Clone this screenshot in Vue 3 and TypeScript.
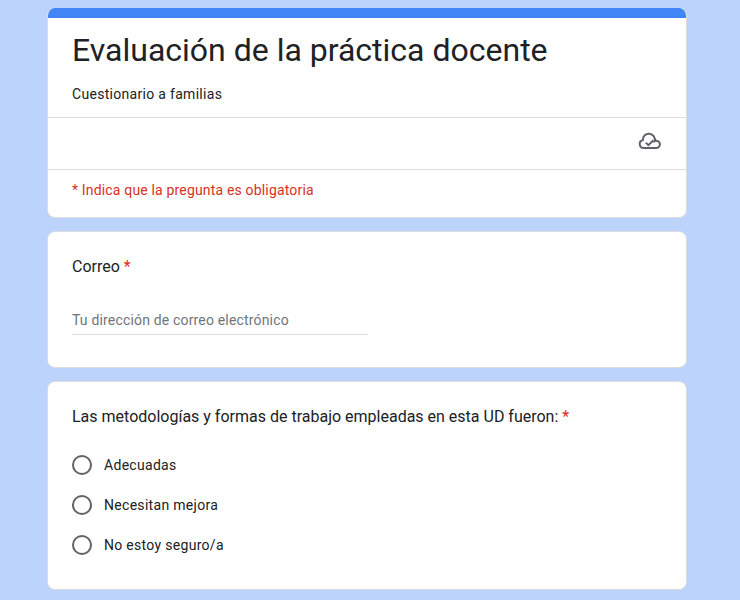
<script setup lang="ts">
const options: string[] = ['Adecuadas', 'Necesitan mejora', 'No estoy seguro/a']
</script>

<template>
  <main class="page">
    <section class="card head">
      <div class="bar"></div>
      <div class="intro">
        <h1 class="title">Evaluación de la práctica docente</h1>
        <p class="subtitle">Cuestionario a familias</p>
      </div>
      <div class="status">
        <svg class="cloud" viewBox="0 0 24 24" width="24" height="24" aria-hidden="true">
          <path d="M5.8 19A4.05 4.05 0 0 1 4.9 11A6 6 0 1 1 16.7 12.2A3.6 3.6 0 1 1 18.3 19Z" />
          <path d="M7.8 13.6l2.6 2.6l5-5" />
        </svg>
      </div>
      <p class="required">* Indica que la pregunta es obligatoria</p>
    </section>

    <section class="card email">
      <div class="question">Correo <span class="star">*</span></div>
      <div class="field">Tu dirección de correo electrónico</div>
    </section>

    <section class="card choice">
      <div class="question">Las metodologías y formas de trabajo empleadas en esta UD fueron: <span class="star">*</span></div>
      <ul class="options">
        <li v-for="option in options" :key="option" class="option">
          <span class="radio"></span>
          <span class="label">{{ option }}</span>
        </li>
      </ul>
    </section>
  </main>
</template>

<style>
html, body {
  margin: 0;
  background: #bcd3fb;
}
</style>

<style scoped>
.page {
  box-sizing: border-box;
  width: 640px;
  height: 600px;
  margin-left: 47px;
  padding-top: 8px;
  display: flex;
  flex-direction: column;
  gap: 13px;
  overflow: hidden;
  font-family: Roboto, "Liberation Sans", sans-serif;
  color: #202124;
}
.card {
  box-sizing: border-box;
  background: #fff;
  border: 1px solid #dadce0;
  border-radius: 8px;
  flex: none;
}
.head {
  height: 210px;
  overflow: hidden;
  border-top: none;
}
.bar {
  height: 10px;
  background: #4285f4;
}
.intro {
  height: 99px;
  box-sizing: border-box;
  padding: 12px 24px 0;
}
.title {
  margin: 0;
  font-size: 32px;
  font-weight: 400;
  line-height: 40px;
}
.subtitle {
  margin: 14px 0 0;
  font-size: 14px;
  line-height: 20px;
  letter-spacing: 0.3px;
}
.status {
  height: 53px;
  box-sizing: border-box;
  padding: 0 24px 5px 0;
  border-top: 1px solid #dadce0;
  border-bottom: 1px solid #dadce0;
  display: flex;
  align-items: center;
  justify-content: flex-end;
}
.cloud {
  fill: none;
  stroke: #5f6368;
  stroke-width: 2;
}
.required {
  margin: 10px 24px 0;
  font-size: 14px;
  line-height: 20px;
  letter-spacing: 0.17px;
  color: #d93025;
}
.email {
  height: 137px;
  padding: 23px 24px 0;
}
.question {
  font-size: 16px;
  line-height: 24px;
}
.star {
  color: #d93025;
}
.field {
  box-sizing: border-box;
  width: 296px;
  height: 27px;
  margin-top: 29px;
  border-bottom: 1px solid #dadce0;
  font-size: 14px;
  line-height: 24px;
  letter-spacing: 0.17px;
  color: #70757a;
}
.choice {
  height: 209px;
  padding: 23px 24px 0;
}
.options {
  list-style: none;
  margin: 24px 0 0;
  padding: 0;
  display: flex;
  flex-direction: column;
  gap: 16px;
}
.option {
  height: 24px;
  display: flex;
  align-items: center;
  gap: 12px;
}
.radio {
  box-sizing: border-box;
  width: 20px;
  height: 20px;
  border: 2px solid #5f6368;
  border-radius: 50%;
  flex: none;
}
.label {
  font-size: 14px;
  line-height: 20px;
  letter-spacing: 0.3px;
}
</style>
